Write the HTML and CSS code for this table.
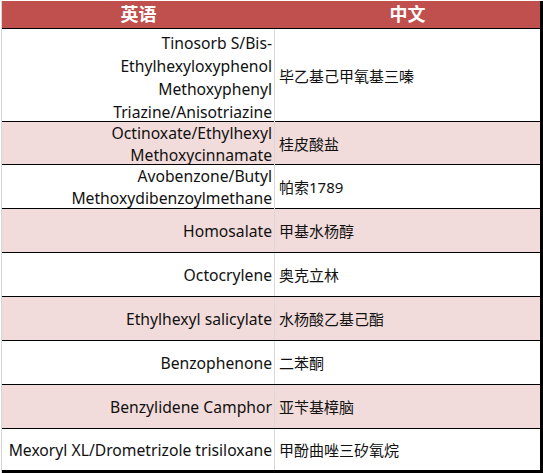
FILE: index.html
```html
<!DOCTYPE html>
<html lang="zh-CN">
<head>
<meta charset="utf-8">
<title>防晒成分 英语 / 中文</title>
<link rel="stylesheet" href="styles.css">
</head>
<body>
<div class="sheet">
  <div class="row head">
    <div class="cell en">英语</div>
    <div class="cell zh">中文</div>
  </div>
  <div class="row tall">
    <div class="cell en">Tinosorb S/Bis-<br>Ethylhexyloxyphenol<br>Methoxyphenyl<br>Triazine/Anisotriazine</div>
    <div class="cell zh">毕乙基己甲氧基三嗪</div>
  </div>
  <div class="row pink h43">
    <div class="cell en">Octinoxate/Ethylhexyl<br>Methoxycinnamate</div>
    <div class="cell zh">桂皮酸盐</div>
  </div>
  <div class="row">
    <div class="cell en">Avobenzone/Butyl<br>Methoxydibenzoylmethane</div>
    <div class="cell zh">帕索1789</div>
  </div>
  <div class="row pink">
    <div class="cell en">Homosalate</div>
    <div class="cell zh">甲基水杨醇</div>
  </div>
  <div class="row">
    <div class="cell en">Octocrylene</div>
    <div class="cell zh">奥克立林</div>
  </div>
  <div class="row pink">
    <div class="cell en">Ethylhexyl salicylate</div>
    <div class="cell zh">水杨酸乙基己酯</div>
  </div>
  <div class="row">
    <div class="cell en">Benzophenone</div>
    <div class="cell zh">二苯酮</div>
  </div>
  <div class="row pink">
    <div class="cell en">Benzylidene Camphor</div>
    <div class="cell zh">亚苄基樟脑</div>
  </div>
  <div class="row last">
    <div class="cell en">Mexoryl XL/Drometrizole trisiloxane</div>
    <div class="cell zh">甲酚曲唑三矽氧烷</div>
  </div>
</div>
</body>
</html>
```

FILE: styles.css
```css
* { box-sizing: border-box; }
html, body { margin: 0; padding: 0; background: #fff; }
body {
  font-family: "Noto Sans", "Noto Sans CJK SC", sans-serif;
  font-size: 15px;
  color: #111;
}
.sheet {
  width: 542px;
  margin: 1px 0 0 1px;
  border-left: 1px solid #d6d6d6;
  border-right: 3px solid #000;
}
.row {
  display: grid;
  grid-template-columns: 273px 1fr;
  height: 44px;
  border-bottom: 1px solid #000;
  line-height: 22px;
}
.cell {
  display: flex;
  flex-direction: column;
  justify-content: center;
}
.cell.en {
  text-align: right;
  padding-right: 2px;
  border-right: 1px solid #d8d8d8;
  font-size: 15.7px;
  white-space: nowrap;
}
.cell.zh {
  text-align: left;
  padding-left: 4px;
}
.head {
  height: 28px;
  background: #c0504d;
  color: #fff;
  font-weight: bold;
  line-height: 27px;
}
.head .cell { text-align: center; padding: 0; border-right: none; font-size: 18px; }
.tall { height: 93px; line-height: 23px; }
.tall .en { padding-top: 3px; }
.h43 { height: 43px; }
.pink { background: #f2dcdb; }
.last { border-bottom: 3px solid #000; }
```
